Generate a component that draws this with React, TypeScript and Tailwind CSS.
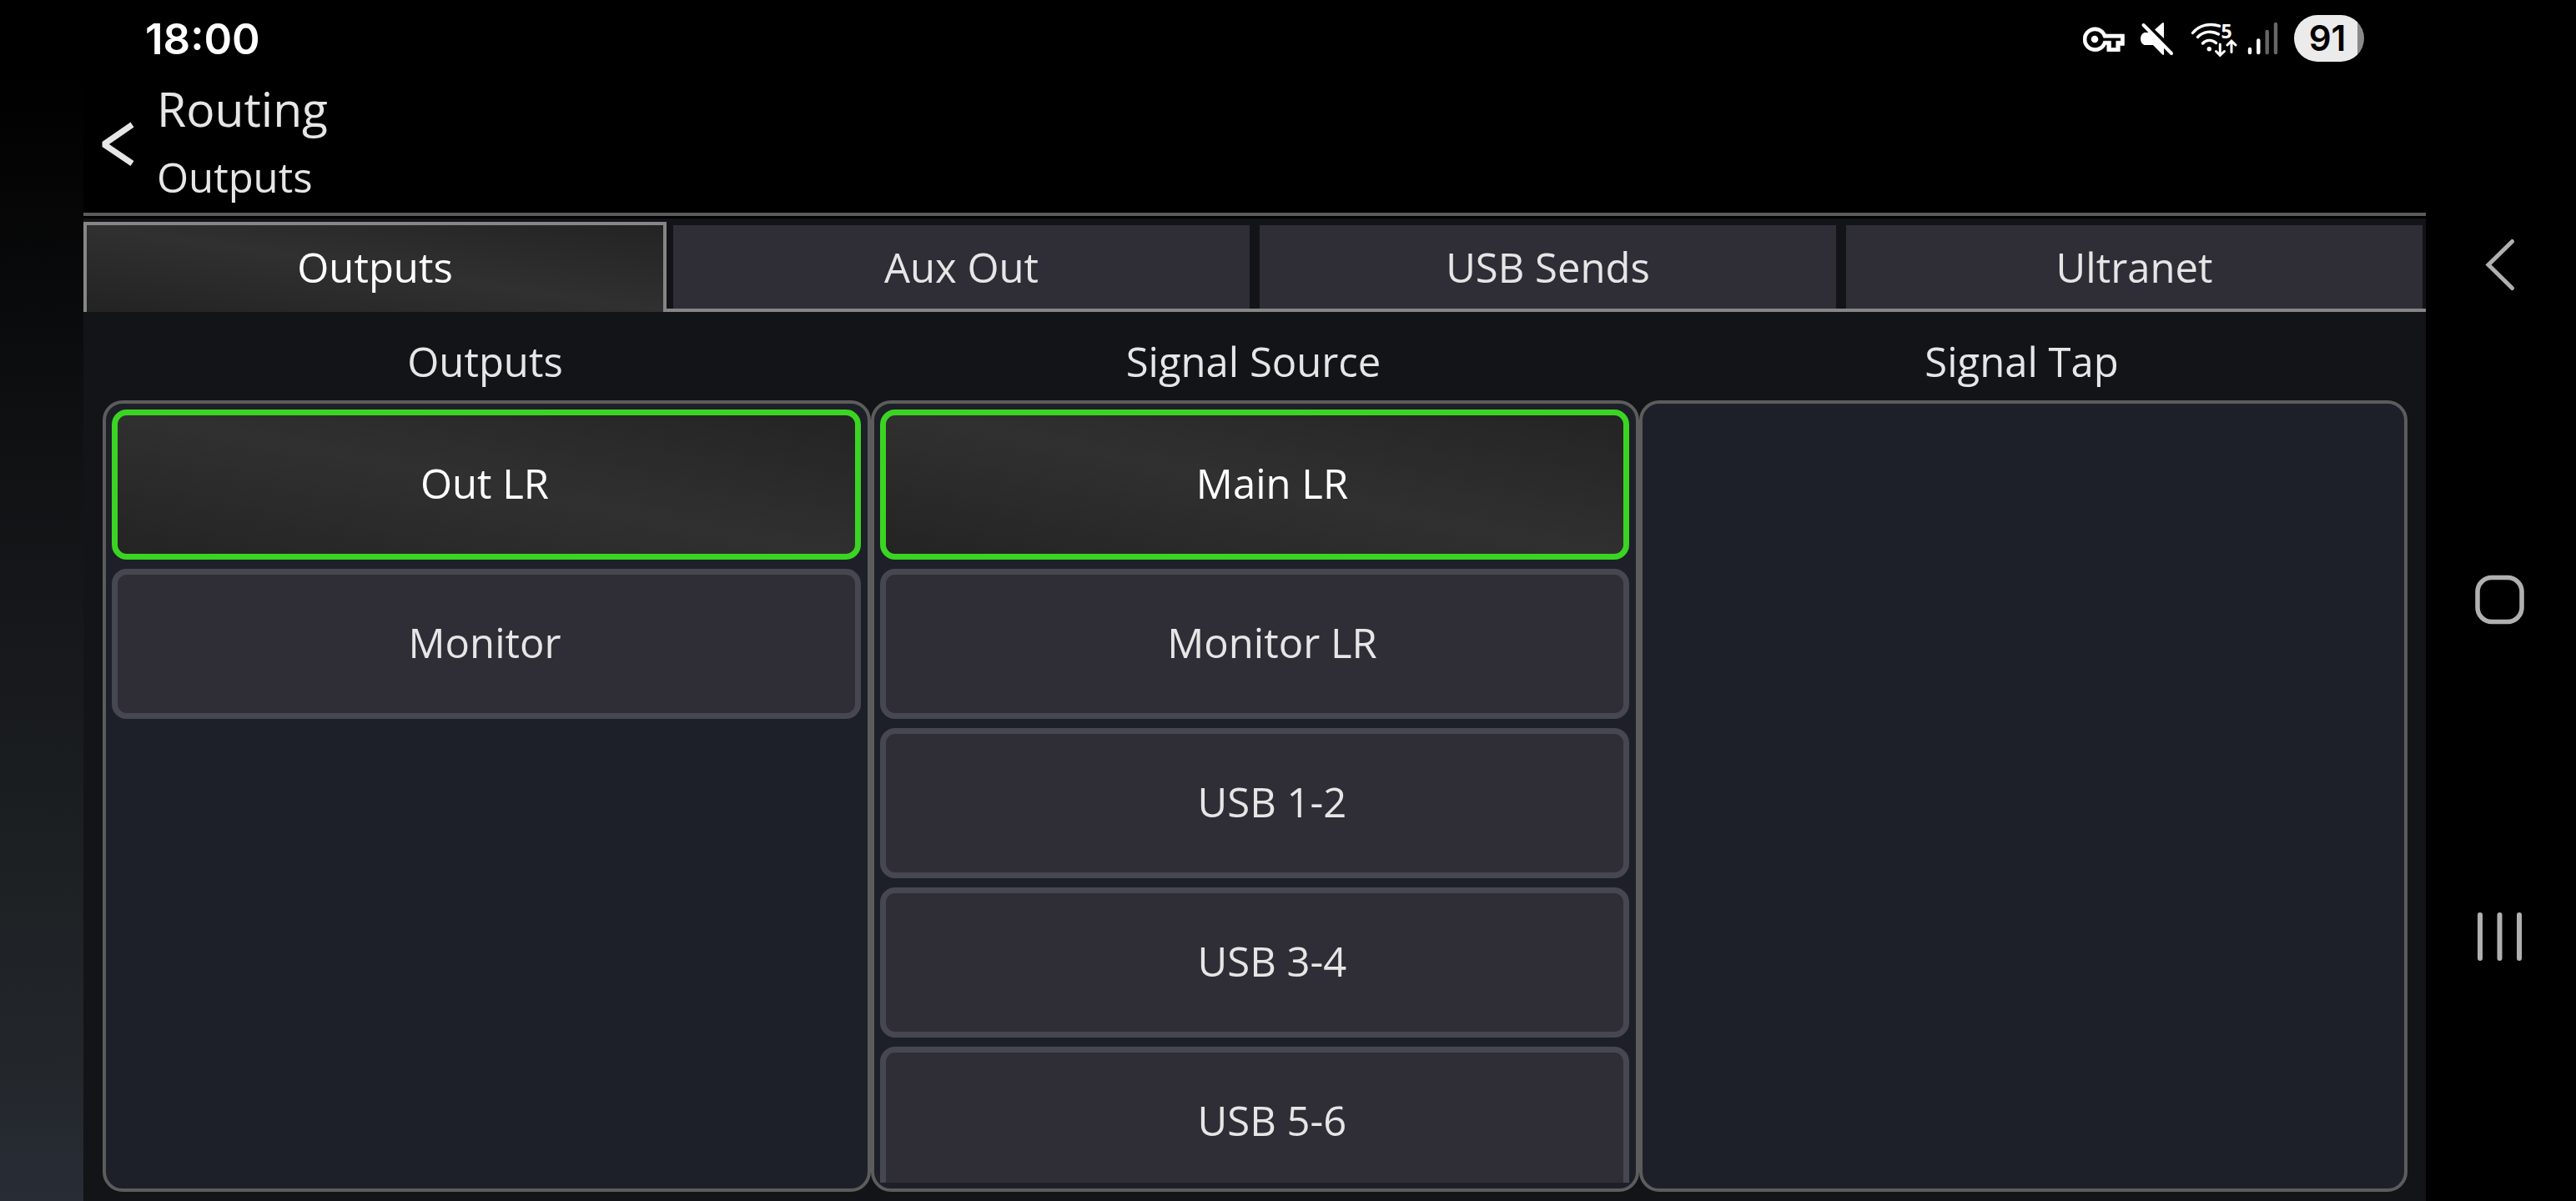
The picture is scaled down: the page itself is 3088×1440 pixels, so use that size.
import React, { useState } from 'react';
import clsx from 'clsx';

// ------------------ Data ------------------ //
const tabs = ['Outputs', 'Aux Out', 'USB Sends', 'Ultranet'];

const outputs = ['Out LR', 'Monitor'];

const sources = ['Main LR', 'Monitor LR', 'USB 1-2', 'USB 3-4', 'USB 5-6'];

// ------------------ Status bar ------------------ //
const KeyIcon = () => (
  <svg width="52" height="56" viewBox="0 0 52 56" fill="#fff">
    <g transform="translate(0 4.5) scale(2.06)">
      <path
        d="M21.5 19h-7.5v-4h-.68c-1.14 2.42-3.6 4-6.32 4-3.86 0-7-3.14-7-7s3.14-7 7-7c2.72 0 5.17 1.58 6.32 4H24v6.5h-2.5zm-5.2-2h3v-4h2.7v-2H11.94l-.23-.67C11.01 8.34 9.11 7 7 7c-2.76 0-5 2.24-5 5s2.24 5 5 5c2.11 0 4.01-1.34 4.71-3.33l.23-.67H16.3v4z"
        stroke="#fff"
        strokeWidth="0.3"
      />
      <circle cx="6.8" cy="11.9" r="2.1" />
    </g>
  </svg>
);

const MuteIcon = () => (
  <svg width="50" height="56" viewBox="0 0 50 56" fill="#fff">
    <path d="M22 17.5 31 9.5Q33 8 33 10.5V28Z" />
    <path d="M15 21 33 39V46.5Q33 49 31 47.3L20 36H9.5Q5 34 5 28.5T9.5 21Z" />
    <path d="M8.5 12 42 46" stroke="#fff" strokeWidth="4" strokeLinecap="round" />
  </svg>
);

const WifiIcon = () => (
  <svg width="59" height="56" viewBox="0 0 59 56" fill="none" stroke="#fff" strokeWidth="3.4" strokeLinecap="round">
    <path d="M5.5 21.5C14 11.5 27 9.5 37.5 13.2" />
    <path d="M11.5 26.5C18 19.8 28.5 18.2 36.5 23" />
    <path d="M17.5 34C22 29.3 29 29.3 33.5 33.5" />
    <circle cx="25.3" cy="40.7" r="2.7" fill="#fff" stroke="none" />
    <path d="M38.3 35V48M33.5 43.5 38.3 48.3 43.5 43.5" strokeWidth="3" />
    <path d="M52 44.5V32M47 36 52 31 57 36" strokeWidth="3" />
    <text x="39.5" y="27.5" fill="#fff" stroke="none" fontSize="23" fontWeight="700" fontFamily="Open Sans, sans-serif">5</text>
  </svg>
);

const SignalIcon = () => (
  <svg width="44" height="56" viewBox="0 0 44 56" strokeWidth="4.4" strokeLinecap="round">
    <path d="M3 41V45M13.3 30.5V45" stroke="#fff" />
    <path d="M23.7 20V45M34 11V45" stroke="#666" />
  </svg>
);

const StatusBar = () => (
  <div className="flex h-[90px] shrink-0 items-center justify-between bg-black pt-0.5 pr-[74px] pl-[174px]">
    <span className="font-[Inter,sans-serif] text-[51px] leading-none font-semibold text-white">18:00</span>
    <div className="flex items-center gap-3">
      <KeyIcon />
      <MuteIcon />
      <WifiIcon />
      <SignalIcon />
      <div className="flex h-14 w-[84px] items-center justify-center rounded-full bg-[linear-gradient(to_right,#ebebeb_76px,#8a8a8a_76px)] pr-1 font-[Inter,sans-serif] text-[42px] leading-none font-semibold text-black">
        91
      </div>
    </div>
  </div>
);

// ------------------ System navigation ------------------ //
const SystemNav = () => (
  <nav className="flex w-[180px] shrink-0 flex-col items-center justify-between bg-black py-[277px]">
    <button type="button" aria-label="Back">
      <svg width="80" height="80" viewBox="0 0 80 80" fill="none" stroke="#b0b0b0" strokeWidth="5" strokeLinecap="round">
        <path d="M53.5 12.5 25 40.5 53.5 68.5" />
      </svg>
    </button>
    <button type="button" aria-label="Home">
      <svg width="80" height="80" viewBox="0 0 80 80" fill="none" stroke="#b0b0b0" strokeWidth="5.5">
        <rect x="12" y="12.5" width="53" height="53" rx="17" />
      </svg>
    </button>
    <button type="button" aria-label="Recent apps">
      <svg width="80" height="80" viewBox="0 0 80 80" fill="none" stroke="#b0b0b0" strokeWidth="6" strokeLinecap="round">
        <path d="M15 14V66M38.5 14V66M62 14V66" />
      </svg>
    </button>
  </nav>
);

// ------------------ Routing columns ------------------ //
type RouteButtonProps = {
  label: string;
  selected: boolean;
  onClick: () => void;
};

const RouteButton: React.FC<RouteButtonProps> = ({ label, selected, onClick }) => (
  <button
    type="button"
    aria-pressed={selected}
    onClick={onClick}
    className={clsx(
      'flex h-[180px] w-full shrink-0 items-center justify-center rounded-[18px] border-[7px] pr-1 pb-1',
      selected
        ? 'border-[#3bd423] bg-[linear-gradient(to_top_right,#232323,#303030,#232323)] bg-origin-border text-white'
        : 'border-[#474751] bg-[#2f2e37] text-[#e6e6e6]'
    )}
  >
    {label}
  </button>
);

type RouteColumnProps = {
  title: string;
  items: string[];
  initial?: string;
  listClassName?: string;
};

const RouteColumn: React.FC<RouteColumnProps> = ({ title, items, initial, listClassName }) => {
  const [selected, setSelected] = useState(initial);

  return (
    <section className="flex min-h-0 flex-col">
      <h2 className="flex h-[106px] shrink-0 items-center justify-center pt-3 pr-1">{title}</h2>
      <div className="min-h-0 flex-1 rounded-3xl border-4 border-[#5c5c5c] bg-[#1e2029] py-[7px] pr-2 pl-[7px]">
        <div className={clsx('flex h-full flex-col gap-[11px] overflow-y-auto [scrollbar-width:none]', listClassName)}>
          {items.map((item) => (
            <RouteButton
              key={item}
              label={item}
              selected={item === selected}
              onClick={() => setSelected(item)}
            />
          ))}
        </div>
      </div>
    </section>
  );
};

const App: React.FC = () => {
  const [activeTab, setActiveTab] = useState('Outputs');

  return (
    <div className="flex h-screen bg-black font-['Open_Sans',sans-serif] text-[49px] leading-[82px] text-[#e6e6e6]">
      <div className="flex min-w-0 flex-1 flex-col">
        <StatusBar />

        <div className="flex min-h-0 flex-1">
          <div className="w-[100px] shrink-0 bg-[linear-gradient(to_bottom,#000,#101113_33%,#1a1d20_62%,#22262a_86%,#282c35)]" />

          <main className="flex min-w-0 flex-1 flex-col bg-[#131417]">
            <header className="flex h-[169px] shrink-0 items-center border-b-4 border-[#5c5c5c] bg-black pb-1 pl-5">
              <button type="button" aria-label="Go back" className="mr-6">
                <svg width="44" height="60" viewBox="0 0 44 60" fill="none" stroke="#e6e6e6" strokeWidth="7">
                  <path d="M38.5 8.5 4.5 32 38.5 55" strokeLinejoin="bevel" />
                </svg>
              </button>
              <div>
                <h1 className="text-[57px]">Routing</h1>
                <p>Outputs</p>
              </div>
            </header>

            <div className="shrink-0 border-t-[3px] border-black pt-1">
              <div role="tablist" className="grid h-[108px] grid-cols-4 gap-1 shadow-[inset_0_-4px_0_#868686]">
                {tabs.map((tab) => (
                  <button
                    key={tab}
                    type="button"
                    role="tab"
                    aria-selected={tab === activeTab}
                    onClick={() => setActiveTab(tab)}
                    className={clsx(
                      'flex items-center justify-center',
                      tab === activeTab
                        ? 'border-x-4 border-t-4 border-[#868686] bg-[linear-gradient(to_top_right,#232323,#303030,#232323)] pb-1 text-white'
                        : 'm-1 bg-[#2f2e37]'
                    )}
                  >
                    {tab}
                  </button>
                ))}
              </div>
            </div>

            <div className="grid min-h-0 flex-1 grid-cols-3 grid-rows-[minmax(0,1fr)] pr-[22px] pb-[11px] pl-[23px]">
              <RouteColumn title="Outputs" items={outputs} initial="Out LR" />
              <RouteColumn title="Signal Source" items={sources} initial="Main LR" listClassName="[&>button]:pl-[46px]" />
              <RouteColumn title="Signal Tap" items={[]} />
            </div>
          </main>
        </div>
      </div>

      <SystemNav />
    </div>
  );
};

export default App;
